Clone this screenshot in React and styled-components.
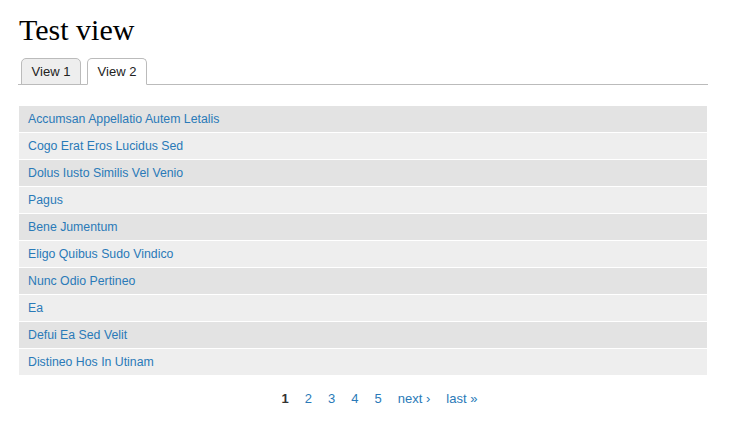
import styled, { createGlobalStyle } from 'styled-components';

const GlobalStyle = createGlobalStyle`
  body {
    margin: 0;
    background: #fff;
    font-family: "Liberation Sans", Arial, sans-serif;
  }
`

const Page = styled.div`
  width: 690px;
  padding: 11px 0 0 18px;
`

const Title = styled.h1`
  margin: 0 0 0 1px;
  font-family: "Liberation Serif", "Times New Roman", serif;
  font-weight: normal;
  font-size: 30px;
  line-height: 38px;
  color: #000;
`

const Tabs = styled.ul`
  display: flex;
  gap: 6px;
  list-style: none;
  margin: 9px 0 0;
  padding: 0 0 0 3px;
  border-bottom: 1px solid #bbb;
`

const Tab = styled.li`
  width: 60px;
  height: 27px;
  box-sizing: border-box;
  margin-bottom: -1px;
  border: 1px solid #bbb;
  border-bottom-color: ${p => (p.$active ? '#fff' : '#bbb')};
  border-radius: 5px 5px 0 0;
  background: ${p => (p.$active ? '#fff' : '#eee')};
  font-size: 13px;
  line-height: 25px;
  text-align: center;
  color: #222;
`

const Table = styled.div`
  margin: 21px 1px 0;
  display: flex;
  flex-direction: column;
  gap: 1px;
`

const Row = styled.div`
  height: 26px;
  padding-left: 9px;
  background: ${p => (p.$odd ? '#e3e3e3' : '#eeeeee')};
  font-size: 12.3px;
  line-height: 26px;
  color: #2a7ab8;
`

const Pager = styled.div`
  display: flex;
  justify-content: center;
  gap: 16px;
  margin-top: 16px;
  padding-left: 33px;
  font-size: 13px;
  line-height: 16px;
`

const PageLink = styled.span`
  color: ${p => (p.$current ? '#333' : '#2a7ab8')};
  font-weight: ${p => (p.$current ? 'bold' : 'normal')};
`

const items = [
  'Accumsan Appellatio Autem Letalis',
  'Cogo Erat Eros Lucidus Sed',
  'Dolus Iusto Similis Vel Venio',
  'Pagus',
  'Bene Jumentum',
  'Eligo Quibus Sudo Vindico',
  'Nunc Odio Pertineo',
  'Ea',
  'Defui Ea Sed Velit',
  'Distineo Hos In Utinam',
]

const App = () => {
  return (
    <>
      <GlobalStyle />
      <Page>
        <Title>Test view</Title>
        <Tabs>
          <Tab>View 1</Tab>
          <Tab $active>View 2</Tab>
        </Tabs>
        <Table>
          {items.map((t, i) => (
            <Row key={t} $odd={i % 2 === 0}>{t}</Row>
          ))}
        </Table>
        <Pager>
          <PageLink $current>1</PageLink>
          <PageLink>2</PageLink>
          <PageLink>3</PageLink>
          <PageLink>4</PageLink>
          <PageLink>5</PageLink>
          <PageLink>next ›</PageLink>
          <PageLink>last »</PageLink>
        </Pager>
      </Page>
    </>
  );
}

export default App;
